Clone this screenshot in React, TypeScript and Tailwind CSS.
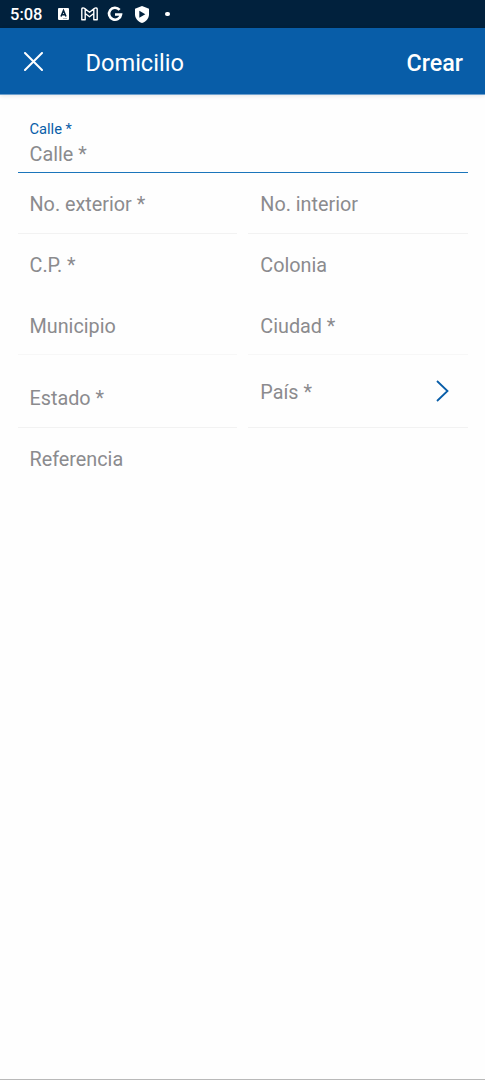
import type { ReactNode } from "react";

function StatusBar() {
  return (
    <div className="flex h-7 shrink-0 items-center bg-[#01213d] pl-[10px] text-white">
      <span className="w-[48px] pt-px text-[16.500px] leading-5 font-medium">5:08</span>
      <svg className="h-[12px] w-[11px]" viewBox="0 0 11 12">
        <rect width="11" height="12" rx="1" fill="currentColor" />
        <path d="M3 8.500 5.500 2.500 8 8.500M4 6.800h3" fill="none" stroke="#01213d" strokeWidth="1.600" />
        <path d="M5 10.500h4" stroke="#8d9eac" strokeWidth="0.700" />
      </svg>
      <svg className="ml-[12px] h-[14px] w-[17px]" viewBox="0 0 17 14" fill="none" stroke="currentColor" strokeWidth="1.400" strokeLinejoin="round">
        <path d="M.8 2v10.800h3.400V6.500L8.500 9.800l4.300-3.300v6.300h3.400V2C16.200.8 14.500.6 13.500 1.400l-5 3.800-5-3.800C2.500.6.8.8.8 2ZM4.200 6.500V2M12.800 6.500V2" />
      </svg>
      <svg className="ml-[9px] h-4 w-4" viewBox="0 0 16 16" fill="none" stroke="currentColor" strokeWidth="2.600">
        <path d="M12.600 3.800A6 6 0 1 0 14 8.500H8" />
      </svg>
      <svg className="ml-[12px] h-[17px] w-[14px]" viewBox="0 0 14 17">
        <path d="M7 0 14 2.800v5.400c0 4.200-3 7.400-7 8.800-4-1.400-7-4.600-7-8.800V2.800Z" fill="currentColor" />
        <path d="M4.300 4.800v7l6-3.500Z" fill="#01213d" />
      </svg>
      <span className="ml-[16px] h-[4.500px] w-[4.500px] rounded-full bg-white" />
    </div>
  );
}

function Field({ children, className }: { children: ReactNode; className: string }) {
  return <div className={`flex min-w-0 border-b ${className}`}>{children}</div>;
}

export default function App() {
  return (
    <div className="flex h-[1080px] w-[485px] flex-col overflow-hidden border-b border-[#b9b9b9] bg-[#fefefe] font-['Roboto',sans-serif]">
      <StatusBar />
      <header className="z-10 flex h-[67px] shrink-0 items-center border-b border-[#6d9fcd] bg-[#085da8] pr-[22px] pl-6 text-white shadow-[0_1px_4px_rgba(0,0,0,0.1)]">
        <svg className="mt-px h-[19px] w-[19px]" viewBox="0 0 19 19" stroke="currentColor" strokeWidth="2" strokeLinecap="round">
          <path d="m1 1 17 17M18 1 1 18" />
        </svg>
        <h1 className="ml-[42.500px] flex-1 pt-[3px] text-[23.600px] leading-7">Domicilio</h1>
        <button className="pt-[3px] text-[23.300px] leading-7 font-medium">Crear</button>
      </header>
      <main className="flex flex-col pr-[17px] pl-[18px] text-[19.800px] leading-6 text-[#8b8b8e]">
        <div className="flex h-[78px] flex-col border-b border-[#1b75bb] pt-[26px] pl-[11.500px]">
          <label className="text-[14.700px] leading-4 text-[#085da8]">Calle *</label>
          <span className="pt-[6px]">Calle *</span>
        </div>
        <div className="grid h-[61px] grid-cols-[219px_220px] gap-[11px]">
          <Field className="border-[#f2f2f2] pt-[20px] pl-[11.500px]">No. exterior *</Field>
          <Field className="border-[#f2f2f2] pt-[20px] pl-[12.300px]">No. interior</Field>
        </div>
        <div className="grid h-[60px] grid-cols-[219px_220px] gap-[11px]">
          <Field className="border-transparent pt-[20px] pl-[11.500px]">C.P. *</Field>
          <Field className="border-transparent pt-[20px] pl-[12.300px]">Colonia</Field>
        </div>
        <div className="grid h-[61px] grid-cols-[219px_220px] gap-[11px]">
          <Field className="border-[#f7f7f7] pt-[21px] pl-[11.500px]">Municipio</Field>
          <Field className="border-[#f7f7f7] pt-[21px] pl-[12.300px]">Ciudad *</Field>
        </div>
        <div className="grid h-[73px] grid-cols-[219px_220px] gap-[11px]">
          <Field className="border-[#f2f2f2] pt-[32px] pl-[11.500px]">Estado *</Field>
          <Field className="justify-between border-[#f2f2f2] pt-[26px] pr-[19px] pl-[12.300px]">
            <span>País *</span>
            <svg className="-mt-px h-[22px] w-[13px]" viewBox="0 0 13 22" fill="none" stroke="#085da8" strokeWidth="1.800">
              <path d="m1 1 10.500 10L1 21" />
            </svg>
          </Field>
        </div>
        <div className="pt-[20px] pl-[11.500px]">Referencia</div>
      </main>
    </div>
  );
}
